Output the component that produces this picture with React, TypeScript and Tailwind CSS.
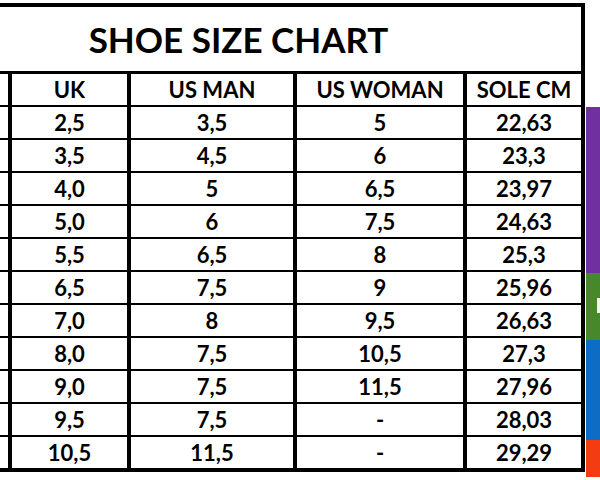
const rows = [
  ["2,5", "3,5", "5", "22,63"],
  ["3,5", "4,5", "6", "23,3"],
  ["4,0", "5", "6,5", "23,97"],
  ["5,0", "6", "7,5", "24,63"],
  ["5,5", "6,5", "8", "25,3"],
  ["6,5", "7,5", "9", "25,96"],
  ["7,0", "8", "9,5", "26,63"],
  ["8,0", "7,5", "10,5", "27,3"],
  ["9,0", "7,5", "11,5", "27,96"],
  ["9,5", "7,5", "-", "28,03"],
  ["10,5", "11,5", "-", "29,29"],
]

const widths = ["w-[119px]", "w-[166px]", "w-[170px]", "w-[118px]"]

function Row({ cells, header, last }: { cells: string[]; header?: boolean; last?: boolean }) {
  return (
    <div
      className={`flex border-black ${last ? "h-[35px] border-b-4" : "h-[33px] border-b-2"} ${
        header ? "text-[22px]" : "text-[22px]"
      }`}
    >
      {/* sliver of the cut-off first column */}
      <div className="w-[8px]" />
      {cells.map((c, i) => (
        <div
          key={i}
          className={`${widths[i]} flex items-center justify-center border-l-4 border-black leading-none`}
        >
          {c}
        </div>
      ))}
    </div>
  )
}

export default function App() {
  return (
    <div
      className="relative h-[480px] w-[600px] overflow-hidden bg-white pt-[3px] font-bold text-black"
      style={{ fontFamily: "Lato, 'Open Sans', sans-serif" }}
    >
      <div className="w-[585px] border-r-4 border-t-4 border-black">
        <div className="flex h-[67px] items-center justify-center border-b-[3px] border-black pr-[104px] text-[35px] leading-none">
          SHOE SIZE CHART
        </div>
        <Row cells={["UK", "US MAN", "US WOMAN", "SOLE CM"]} header />
        {rows.map((r, i) => (
          <Row key={i} cells={r} last={i === rows.length - 1} />
        ))}
      </div>

      {/* coloured strip on the right edge */}
      <div className="absolute left-[586px] top-[107px] flex w-[14px] flex-col">
        <div className="h-[166px] bg-[#7030a0]" />
        <div className="relative h-[67px] bg-[#47882b]">
          <div className="absolute right-0 top-[25px] h-[15px] w-[3px] bg-[#f4f7ee]" />
        </div>
        <div className="h-[100px] bg-[#0f6cc4]" />
        <div className="h-[37px] bg-[#f43c12]" />
      </div>
    </div>
  )
}
